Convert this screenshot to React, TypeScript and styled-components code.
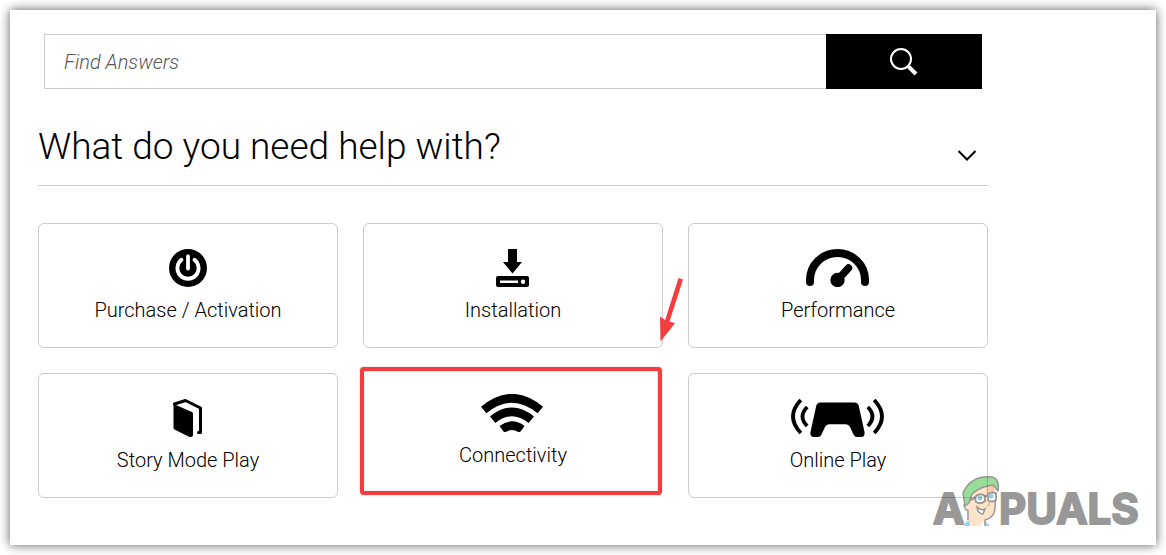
import React from "react";
import styled, { createGlobalStyle, css } from "styled-components";

const GlobalStyle = createGlobalStyle`
  *, *::before, *::after { box-sizing: border-box; }
  body {
    margin: 0;
    background: #fff;
    color: #000;
    font-family: Roboto, "Liberation Sans", sans-serif;
    font-weight: 300;
  }
`;

const Page = styled.div`
  display: flex;
  min-height: 100vh;
  padding: 10px;
`;

const Panel = styled.main`
  position: relative;
  flex: 1;
  padding: 24px 28px 46px;
  background: #fff;
  box-shadow: 0 0 10px rgba(0, 0, 0, 0.65);
`;

const Column = styled.div`
  max-width: 950px;
`;

const SearchForm = styled.form`
  display: flex;
  height: 55px;
  margin: 0 6px;
`;

const SearchInput = styled.input`
  flex: 1;
  min-width: 0;
  padding: 0 19px;
  border: 1px solid #ccc;
  border-right: 0;
  border-radius: 0;
  background: #fff;
  color: #000;
  font: italic 300 20px Roboto, "Liberation Sans", sans-serif;
  &::placeholder { color: #555; opacity: 1; }
`;

const SearchButton = styled.button`
  display: flex;
  align-items: center;
  justify-content: center;
  width: 156px;
  padding: 0;
  border: 0;
  background: #000;
`;

const SectionHeader = styled.header`
  display: flex;
  align-items: center;
  justify-content: space-between;
  height: 97px;
  padding-top: 20px;
  border-bottom: 1px solid #ccc;
`;

const Title = styled.h1`
  margin: 0;
  font-size: 37px;
  line-height: 48px;
  font-weight: 300;
`;

const ToggleButton = styled.button`
  display: flex;
  margin-top: 18px;
  padding: 0 10px;
  border: 0;
  background: none;
`;

const TopicGrid = styled.nav`
  display: grid;
  grid-template-columns: repeat(3, 1fr);
  gap: 25px;
  padding-top: 37px;
`;

const TopicCard = styled.a<{ $active?: boolean }>`
  position: relative;
  display: flex;
  flex-direction: column;
  align-items: center;
  gap: 11px;
  height: 125px;
  padding-top: 25px;
  border: 1px solid #ccc;
  border-radius: 6px;
  color: #000;
  font-size: 20px;
  line-height: 24px;
  text-decoration: none;
  svg { display: block; }
  ${({ $active }) =>
    $active &&
    css`
      border-color: transparent;
      transform: translateY(-5px);
      &::after {
        content: "";
        position: absolute;
        inset: -2px 0 -3px -4px;
        border: 4px solid #f43d3d;
        border-radius: 4px;
        box-shadow: 0 0 1px rgba(0, 0, 0, 0.7), inset 0 0 1px rgba(0, 0, 0, 0.6);
      }
    `}
`;

const Pointer = styled.svg`
  position: absolute;
  left: 646px;
  top: 265px;
`;

const Watermark = styled.svg`
  position: absolute;
  right: 14px;
  bottom: 5px;
  opacity: 0.4;
  text {
    font: 700 42px Inter, sans-serif;
    stroke: #000;
    stroke-width: 2px;
    stroke-linejoin: round;
  }
`;

const PowerIcon = () => (
  <svg width="38" height="38" viewBox="0 0 38 38" aria-hidden="true">
    <circle cx="19" cy="19" r="19" />
    <g fill="none" stroke="#fff" strokeWidth="3.800" strokeLinecap="round">
      <path d="M12.500 10.800a10.600 10.600 0 1 0 13 0" />
      <path d="M19 7.500v12" />
    </g>
  </svg>
);

const InstallIcon = () => (
  <svg width="34" height="38" viewBox="0 0 34 38" aria-hidden="true">
    <path d="M12 0h9v13h5L16.500 24.500 7 13h5z" />
    <path
      fillRule="evenodd"
      d="M2 27h29a2 2 0 0 1 2 2v7a2 2 0 0 1-2 2H2a2 2 0 0 1-2-2v-7a2 2 0 0 1 2-2zM4 31.500v2.500h18v-2.500zM27 30.500a2.200 2.200 0 1 0 0 4.400 2.200 2.200 0 0 0 0-4.400z"
    />
  </svg>
);

const GaugeIcon = () => (
  <svg width="64" height="38" viewBox="0 0 64 38" aria-hidden="true">
    <g fill="none" stroke="#000" strokeWidth="8" strokeLinecap="round">
      <path d="M4 33v-2a27.500 27 0 0 1 55 0v2" />
      <path d="M31.500 31L42.500 19" strokeWidth="7.500" />
    </g>
    <circle cx="31.500" cy="31" r="7.200" />
  </svg>
);

const BookIcon = () => (
  <svg width="30" height="38" viewBox="0 0 30 38" aria-hidden="true">
    <path d="M.5 5L19 13q1 .5 1 2v21q0 2-2 2h-1.500L1.500 30.500Q.5 30 .5 29z" />
    <path d="M1.500 5L12.500 1.500 27.500 9v24.500h-2" fill="none" stroke="#000" strokeWidth="3" strokeLinejoin="round" strokeLinecap="round" />
  </svg>
);

const WifiIcon = () => (
  <svg width="64" height="38" viewBox="1 0 64 38" aria-hidden="true">
    <g fill="none" stroke="#000" strokeWidth="8.500">
      <path d="M3.700 16q28.300-23.500 56.600 0" />
      <path d="M12.700 25.700q19.300-15.700 38.600 0" />
      <path d="M22 35.400q10-7.400 20 0" />
    </g>
  </svg>
);

const ControllerIcon = () => (
  <svg width="94" height="38" viewBox="0 0 94 38" aria-hidden="true">
    <path d="M29.500 3.500h34q3.500 0 4.300 3.500l5.700 26q.8 5-3.500 5h-4q-2.200 0-3.500-2.500l-3.500-7.500q-1.500-2.800-4-2.800H38q-2.500 0-4 2.800L30.500 35.500Q29.200 38 27 38h-4q-4.300 0-3.500-5l5.700-26q.8-3.500 4.300-3.500z" />
    <g fill="none" stroke="#000" strokeWidth="3.800">
      <path d="M9.800 1q-15.600 16.500 0 33" />
      <path d="M16.200 8q-9.500 9.500 0 19" />
      <path d="M83.200 1q15.600 16.500 0 33" />
      <path d="M76.800 8q9.500 9.500 0 19" />
    </g>
  </svg>
);

const Mascot = () => (
  <g>
    <path d="M4 51q2-6 7-6l9 5v1z" fill="#008fd0" />
    <path d="M25 51v-5l5 5z" fill="#008fd0" />
    <path d="M7 27q-5 4 0 8l3 16h10l5-7q10-2 10-10l1-17-8-9-15 7z" fill="#ffbd7d" />
    <path d="M4 29q0 5 4 7v9M25 51v-6q10-3 10-12l1-16" fill="none" stroke="#000" strokeWidth="1.500" />
    <path d="M26 12l9-3-1 13-7-3z" fill="#f08038" />
    <path d="M3 18Q11 0 32 2q8 2 6 14l-5-6q-12 1-21 9l-3 9-4 3z" fill="#00ac00" stroke="#000" strokeWidth="1.500" strokeLinejoin="round" />
    <g fill="#fff" stroke="#000" strokeWidth="1.800">
      <path d="M15 22q5-5 10-1v5q-5 4-9 1z" />
      <path d="M28 19q5-3 8 0v6q-4 3-8 0z" />
    </g>
    <path d="M25 21h3M15 23l-5 2" stroke="#000" strokeWidth="2" />
    <circle cx="20" cy="23" r="2.500" fill="#007abc" />
    <circle cx="31" cy="21" r="2.500" fill="#007abc" />
    <path d="M27 25q5 5 0 6" fill="none" stroke="#9b4f20" strokeWidth="1.300" />
    <path d="M17 32q4 4 8 2l-2 5q-5 0-6-7z" fill="#fff" stroke="#000" strokeWidth="1.500" />
  </g>
);

const topics = [
  { label: "Purchase / Activation", Icon: PowerIcon },
  { label: "Installation", Icon: InstallIcon },
  { label: "Performance", Icon: GaugeIcon },
  { label: "Story Mode Play", Icon: BookIcon },
  { label: "Connectivity", Icon: WifiIcon, active: true },
  { label: "Online Play", Icon: ControllerIcon },
];

export default function App() {
  return (
    <>
      <GlobalStyle />
      <Page>
        <Panel>
          <Column>
            <SearchForm role="search" onSubmit={(e) => e.preventDefault()}>
              <SearchInput type="text" placeholder="Find Answers" aria-label="Find Answers" />
              <SearchButton type="submit" aria-label="Search">
                <svg width="28" height="28" viewBox="0 0 28 28" fill="none" stroke="#fff" aria-hidden="true">
                  <circle cx="11" cy="11" r="10" strokeWidth="2" />
                  <path d="M17.500 17.500l2 2" strokeWidth="2.500" />
                  <path d="M18.800 18.800l7.200 7.200" strokeWidth="4" />
                </svg>
              </SearchButton>
            </SearchForm>
            <SectionHeader>
              <Title>What do you need help with?</Title>
              <ToggleButton type="button" aria-label="Toggle topics">
                <svg width="22" height="14" viewBox="0 0 22 14" aria-hidden="true">
                  <path d="M2.500 2l8.500 8.500L19.500 2" fill="none" stroke="#000" strokeWidth="2" />
                </svg>
              </ToggleButton>
            </SectionHeader>
            <TopicGrid aria-label="Help topics">
              {topics.map(({ label, Icon, active }) => (
                <TopicCard key={label} href="#" $active={active}>
                  <Icon />
                  <span>{label}</span>
                </TopicCard>
              ))}
            </TopicGrid>
          </Column>
          <Pointer width="40" height="70" viewBox="0 0 40 70" aria-hidden="true">
            <path d="M22.500 3l4.500 1.500-13.500 42 5.500 1.700L4.500 66.500 4 41.500l5.200 3.500z" fill="#f43d3d" />
          </Pointer>
          <Watermark width="210" height="66" viewBox="0 0 210 66" role="img" aria-label="Appuals">
            <text x="1" y="50">A</text>
            <g transform="translate(28 1)">
              <Mascot />
            </g>
            <text x="67" y="50">PUALS</text>
          </Watermark>
        </Panel>
      </Page>
    </>
  );
}
